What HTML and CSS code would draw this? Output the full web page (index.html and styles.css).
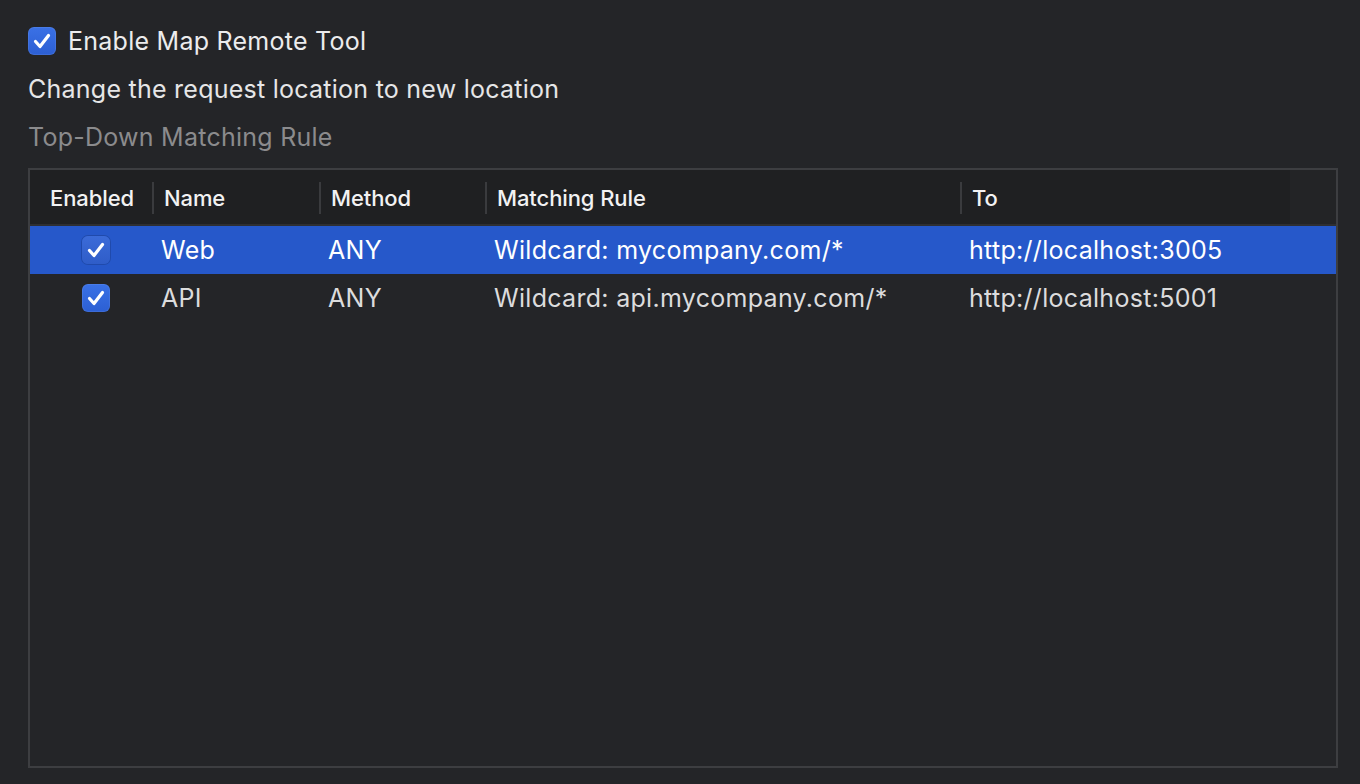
FILE: index.html
```html
<!DOCTYPE html>
<html>
<head>
<meta charset="utf-8">
<link rel="stylesheet" href="styles.css">
</head>
<body>
<div class="page">
  <label class="enable">
    <span class="cb cb-big"><svg viewBox="0 0 28 28" width="28" height="28"><path d="M7.5 14.5 L12 19.5 L20.5 8.5" fill="none" stroke="#fff" stroke-width="3.2" stroke-linecap="round" stroke-linejoin="round"/></svg></span>
    <span class="enable-text">Enable Map Remote Tool</span>
  </label>
  <div class="desc">Change the request location to new location</div>
  <div class="sub">Top-Down Matching Rule</div>
  <div class="table">
    <div class="row head">
      <div class="hc c-en">Enabled</div>
      <div class="hc sep">Name</div>
      <div class="hc sep">Method</div>
      <div class="hc sep">Matching Rule</div>
      <div class="hc sep">To</div>
      <div class="hc filler"></div>
    </div>
    <div class="row body selected">
      <div class="bc c-en"><span class="cb"><svg viewBox="0 0 28 28" width="28" height="28"><path d="M7.5 14.5 L12 19.5 L20.5 8.5" fill="none" stroke="#fff" stroke-width="3.2" stroke-linecap="round" stroke-linejoin="round"/></svg></span></div>
      <div class="bc">Web</div>
      <div class="bc">ANY</div>
      <div class="bc">Wildcard: mycompany.com/*</div>
      <div class="bc">http://localhost:3005</div>
      <div class="bc"></div>
    </div>
    <div class="row body">
      <div class="bc c-en"><span class="cb"><svg viewBox="0 0 28 28" width="28" height="28"><path d="M7.5 14.5 L12 19.5 L20.5 8.5" fill="none" stroke="#fff" stroke-width="3.2" stroke-linecap="round" stroke-linejoin="round"/></svg></span></div>
      <div class="bc">API</div>
      <div class="bc">ANY</div>
      <div class="bc">Wildcard: api.mycompany.com/*</div>
      <div class="bc">http://localhost:5001</div>
      <div class="bc"></div>
    </div>
  </div>
</div>
</body>
</html>
```
FILE: styles.css
```css
html, body {
  margin: 0;
  padding: 0;
  background: #242528;
  font-family: Inter, "Liberation Sans", sans-serif;
  color: #e6e6e7;
}
.page {
  width: 1360px;
  height: 784px;
  box-sizing: border-box;
  padding: 27px 22px 0 28px;
}
.enable {
  display: flex;
  align-items: center;
  gap: 12px;
  height: 28px;
}
.cb {
  display: inline-flex;
  width: 28px;
  height: 28px;
  border-radius: 6px;
  background: linear-gradient(#3a71e6, #2c5fd3);
  box-shadow: inset 0 0 0 1px rgba(255,255,255,0.08);
}
.enable-text {
  font-size: 25px;
  letter-spacing: 0.25px;
  color: #ececed;
}
.desc {
  margin-top: 20px;
  font-size: 25px;
  letter-spacing: 0.25px;
  line-height: 28px;
  color: #e6e6e7;
}
.sub {
  margin-top: 20px;
  font-size: 25px;
  letter-spacing: 0.25px;
  line-height: 28px;
  color: #8b8b8d;
}
.table {
  margin-top: 17px;
  width: 1310px;
  height: 600px;
  box-sizing: border-box;
  border: 2px solid #3d3e41;
  background: #242528;
}
.row {
  display: grid;
  grid-template-columns: 123px 167px 166px 475px 329px 1fr;
}
.head {
  height: 54px;
  background: #1f2022;
  border-bottom: 2px solid #2e2f32;
}
.hc {
  display: flex;
  align-items: center;
  font-size: 22px;
  font-weight: 500;
  letter-spacing: -0.1px;
  color: #f2f2f3;
  padding-left: 11px;
  padding-top: 2px;
  position: relative;
}
.hc.c-en { padding-left: 20px; }
.hc.sep::before {
  content: "";
  position: absolute;
  left: -1px;
  top: 12px;
  bottom: 10px;
  width: 2px;
  background: #3a3b3e;
}
.hc.filler { background: #232426; }
.body {
  height: 48px;
}
.bc {
  display: flex;
  align-items: center;
  font-size: 25px;
  letter-spacing: 0.3px;
  padding-left: 8px;
  color: #dcdcdd;
  white-space: nowrap;
}
.bc.c-en { padding-left: 52px; }
.selected {
  background: #2658ca;
}
.selected .bc { color: #ffffff; }
.selected .cb {
  background: linear-gradient(#3b6bd8, #2f5dc8);
  box-shadow: 0 0 0 1px rgba(0,0,0,0.15);
}
```
